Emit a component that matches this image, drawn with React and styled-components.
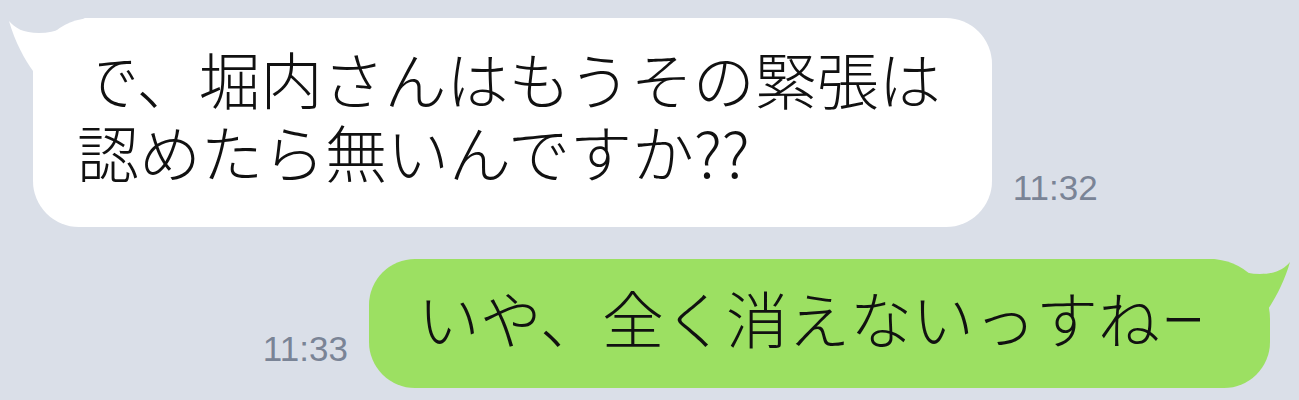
import React from 'react';
import styled, { createGlobalStyle, css } from 'styled-components';

const GlobalStyle = createGlobalStyle`
  html, body {
    margin: 0;
    padding: 0;
    background: #dadfe8;
  }
`;

const Chat = styled.div`
  display: flex;
  flex-direction: column;
  gap: 32px;
  padding: 18px 29px 0 33px;
  height: 400px;
  box-sizing: border-box;
  overflow: hidden;
  background: #dadfe8;
`;

const Row = styled.div`
  display: flex;
  align-items: flex-end;
  gap: 21px;
  justify-content: ${(p) => (p.$mine ? 'flex-end' : 'flex-start')};
`;

const Bubble = styled.div`
  position: relative;
  white-space: nowrap;
  font-family: "Noto Sans CJK JP", "Noto Sans", sans-serif;
  font-weight: 300;
  font-size: 62px;
  line-height: 73px;
  color: #111;
  border-radius: 46px;

  ${(p) =>
    p.$mine
      ? css`
          background: #9ce062;
          padding: 22px 48px 34px 49px;
          border-top-right-radius: 60px;
        `
      : css`
          background: #ffffff;
          padding: 24px 51px 39px 44px;
          border-top-left-radius: 60px;
        `}
`;

const Line = styled.div`
  display: block;
`;

const Tail = styled.svg`
  position: absolute;
  top: 0;
  width: 90px;
  height: 70px;
  ${(p) =>
    p.$mine
      ? css`
          right: -20px;
          transform: scaleX(-1);
        `
      : css`
          left: -24px;
        `}
`;

const Time = styled.span`
  font-family: "Liberation Sans", Arial, sans-serif;
  font-size: 35px;
  line-height: 1;
  color: #7a8496;
  padding-bottom: 22px;
  white-space: nowrap;
`;

const BubbleTail = ({ mine }) => (
  <Tail $mine={mine} viewBox="0 0 90 70">
    <path
      d="M0,3 C6,10 14,15 30,15 C48,15 60,8 76,0 L90,0 L90,70 L24,70 L24,53 C16,42 6,24 0,3 Z"
      fill={mine ? '#9ce062' : '#ffffff'}
    />
  </Tail>
);

const App = () => (
  <>
    <GlobalStyle />
    <Chat>
      <Row>
        <Bubble>
          <BubbleTail />
          <Line>で、堀内さんはもうその緊張は</Line>
          <Line>認めたら無いんですか??</Line>
        </Bubble>
        <Time>11:32</Time>
      </Row>
      <Row $mine>
        <Time>11:33</Time>
        <Bubble $mine>
          <BubbleTail mine />
          <Line>いや、全く消えないっすねー</Line>
        </Bubble>
      </Row>
    </Chat>
  </>
);

export default App;
